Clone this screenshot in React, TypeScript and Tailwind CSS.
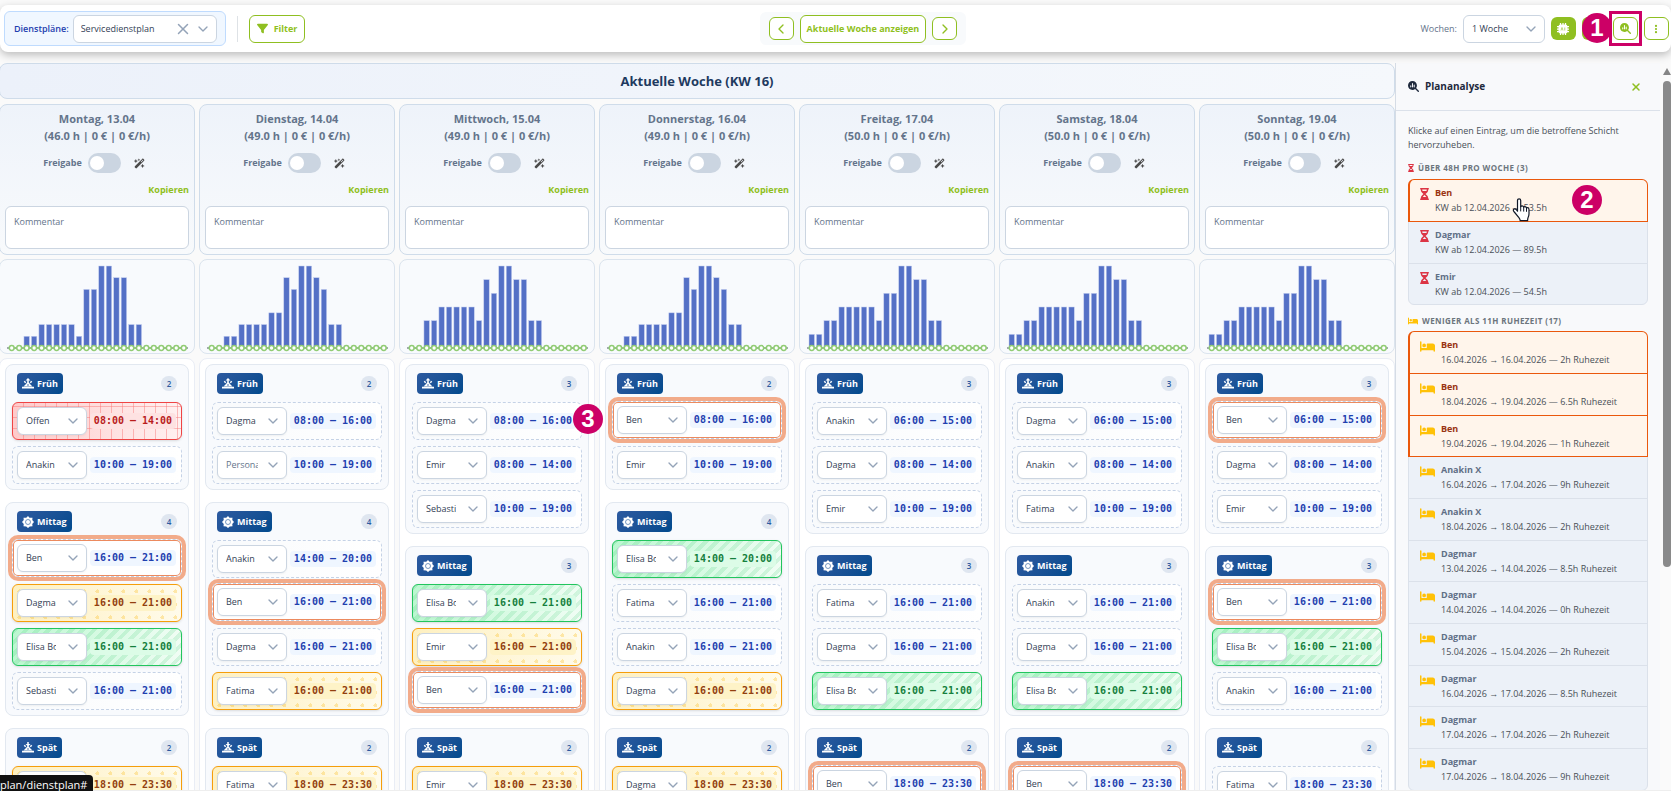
import React, { useState } from "react";
import clsx from "clsx";
import { ChevronDown, ChevronLeft, ChevronRight, X } from "lucide-react";
import {
  FaBed,
  FaEllipsisVertical,
  FaFilter,
  FaHourglassHalf,
  FaMagnifyingGlassChart,
  FaWandMagicSparkles,
} from "react-icons/fa6";

type Tone = "plain" | "red" | "yellow" | "green" | "active";
type Shift = { name: string; time: string; tone?: Tone; marker?: string };
type Day = {
  title: string;
  stats: string;
  load: number[];
  early: Shift[];
  noon: Shift[];
  late: Shift[];
};

const loadA = [0, 0, 1, 1, 2, 2, 2, 2, 2, 1, 5, 5, 7, 7, 6, 6, 2, 2, 0, 0, 0, 0, 0, 0];
const loadB = [0, 0, 1, 1, 2, 2, 2, 2, 3, 3, 6, 5, 7, 7, 6, 5, 2, 2, 0, 0, 0, 0, 0, 0];
const loadC = [0, 0, 2, 2, 3, 3, 3, 3, 3, 2, 5, 4, 6, 6, 5, 5, 2, 2, 0, 0, 0, 0, 0, 0];
const loadD = [1, 1, 2, 2, 3, 3, 3, 3, 3, 2, 4, 4, 6, 6, 5, 5, 2, 2, 0, 0, 0, 0, 0, 0];

const days: Day[] = [
  {
    title: "Montag, 13.04",
    stats: "(46.0 h | 0 € | 0 €/h)",
    load: loadA,
    early: [
      { name: "Offen", time: "08:00 – 14:00", tone: "red" },
      { name: "Anakin X", time: "10:00 – 19:00" },
    ],
    noon: [
      { name: "Ben", time: "16:00 – 21:00", tone: "active" },
      { name: "Dagmar", time: "16:00 – 21:00", tone: "yellow" },
      { name: "Elisa Bo", time: "16:00 – 21:00", tone: "green" },
      { name: "Sebastian", time: "16:00 – 21:00" },
    ],
    late: [
      { name: "Dagmar", time: "18:00 – 23:30", tone: "yellow" },
      { name: "Emir", time: "18:00 – 23:30" },
    ],
  },
  {
    title: "Dienstag, 14.04",
    stats: "(49.0 h | 0 € | 0 €/h)",
    load: loadB,
    early: [
      { name: "Dagmar", time: "08:00 – 16:00" },
      { name: "Personal", time: "10:00 – 19:00" },
    ],
    noon: [
      { name: "Anakin X", time: "14:00 – 20:00" },
      { name: "Ben", time: "16:00 – 21:00", tone: "active" },
      { name: "Dagmar", time: "16:00 – 21:00" },
      { name: "Fatima", time: "16:00 – 21:00", tone: "yellow" },
    ],
    late: [
      { name: "Fatima", time: "18:00 – 23:30", tone: "yellow" },
      { name: "Emir", time: "18:00 – 23:30" },
    ],
  },
  {
    title: "Mittwoch, 15.04",
    stats: "(49.0 h | 0 € | 0 €/h)",
    load: loadC,
    early: [
      { name: "Dagmar", time: "08:00 – 16:00", marker: "3" },
      { name: "Emir", time: "08:00 – 14:00" },
      { name: "Sebastian", time: "10:00 – 19:00" },
    ],
    noon: [
      { name: "Elisa Bo", time: "16:00 – 21:00", tone: "green" },
      { name: "Emir", time: "16:00 – 21:00", tone: "yellow" },
      { name: "Ben", time: "16:00 – 21:00", tone: "active" },
    ],
    late: [
      { name: "Emir", time: "18:00 – 23:30", tone: "yellow" },
      { name: "Ben", time: "18:00 – 23:30" },
    ],
  },
  {
    title: "Donnerstag, 16.04",
    stats: "(49.0 h | 0 € | 0 €/h)",
    load: loadB,
    early: [
      { name: "Ben", time: "08:00 – 16:00", tone: "active" },
      { name: "Emir", time: "10:00 – 19:00" },
    ],
    noon: [
      { name: "Elisa Bo", time: "14:00 – 20:00", tone: "green" },
      { name: "Fatima", time: "16:00 – 21:00" },
      { name: "Anakin X", time: "16:00 – 21:00" },
      { name: "Dagmar", time: "16:00 – 21:00", tone: "yellow" },
    ],
    late: [
      { name: "Dagmar", time: "18:00 – 23:30", tone: "yellow" },
      { name: "Ben", time: "18:00 – 23:30" },
    ],
  },
  {
    title: "Freitag, 17.04",
    stats: "(50.0 h | 0 € | 0 €/h)",
    load: loadD,
    early: [
      { name: "Anakin X", time: "06:00 – 15:00" },
      { name: "Dagmar", time: "08:00 – 14:00" },
      { name: "Emir", time: "10:00 – 19:00" },
    ],
    noon: [
      { name: "Fatima", time: "16:00 – 21:00" },
      { name: "Dagmar", time: "16:00 – 21:00" },
      { name: "Elisa Bo", time: "16:00 – 21:00", tone: "green" },
    ],
    late: [
      { name: "Ben", time: "18:00 – 23:30", tone: "active" },
      { name: "Emir", time: "18:00 – 23:30" },
    ],
  },
  {
    title: "Samstag, 18.04",
    stats: "(50.0 h | 0 € | 0 €/h)",
    load: loadD,
    early: [
      { name: "Dagmar", time: "06:00 – 15:00" },
      { name: "Anakin X", time: "08:00 – 14:00" },
      { name: "Fatima", time: "10:00 – 19:00" },
    ],
    noon: [
      { name: "Anakin X", time: "16:00 – 21:00" },
      { name: "Dagmar", time: "16:00 – 21:00" },
      { name: "Elisa Bo", time: "16:00 – 21:00", tone: "green" },
    ],
    late: [
      { name: "Ben", time: "18:00 – 23:30", tone: "active" },
      { name: "Emir", time: "18:00 – 23:30" },
    ],
  },
  {
    title: "Sonntag, 19.04",
    stats: "(50.0 h | 0 € | 0 €/h)",
    load: loadD,
    early: [
      { name: "Ben", time: "06:00 – 15:00", tone: "active" },
      { name: "Dagmar", time: "08:00 – 14:00" },
      { name: "Emir", time: "10:00 – 19:00" },
    ],
    noon: [
      { name: "Ben", time: "16:00 – 21:00", tone: "active" },
      { name: "Elisa Bo", time: "16:00 – 21:00", tone: "green" },
      { name: "Anakin X", time: "16:00 – 21:00" },
    ],
    late: [
      { name: "Fatima", time: "18:00 – 23:30" },
      { name: "Emir", time: "18:00 – 23:30" },
    ],
  },
];

const overtime = [
  { name: "Ben", detail: "KW ab 12.04.2026 — 53.5h", active: true },
  { name: "Dagmar", detail: "KW ab 12.04.2026 — 89.5h" },
  { name: "Emir", detail: "KW ab 12.04.2026 — 54.5h" },
];

const restTimes = [
  { name: "Ben", detail: "16.04.2026 → 16.04.2026 — 2h Ruhezeit", active: true },
  { name: "Ben", detail: "18.04.2026 → 19.04.2026 — 6.5h Ruhezeit", active: true },
  { name: "Ben", detail: "19.04.2026 → 19.04.2026 — 1h Ruhezeit", active: true },
  { name: "Anakin X", detail: "16.04.2026 → 17.04.2026 — 9h Ruhezeit" },
  { name: "Anakin X", detail: "18.04.2026 → 18.04.2026 — 2h Ruhezeit" },
  { name: "Dagmar", detail: "13.04.2026 → 14.04.2026 — 8.5h Ruhezeit" },
  { name: "Dagmar", detail: "14.04.2026 → 14.04.2026 — 0h Ruhezeit" },
  { name: "Dagmar", detail: "15.04.2026 → 15.04.2026 — 2h Ruhezeit" },
  { name: "Dagmar", detail: "16.04.2026 → 17.04.2026 — 8.5h Ruhezeit" },
  { name: "Dagmar", detail: "17.04.2026 → 17.04.2026 — 2h Ruhezeit" },
  { name: "Dagmar", detail: "17.04.2026 → 18.04.2026 — 9h Ruhezeit" },
];

const rowTone: Record<Tone, string> = {
  plain: "border-dashed border-[#c5d2e6] bg-linear-to-r from-[#f8fafc] to-white",
  red: "border-[#ef4444] shadow-sm bg-[repeating-linear-gradient(0deg,transparent_0_10px,#f8717170_10px_11px),repeating-linear-gradient(90deg,transparent_0_10px,#f8717170_10px_11px),linear-gradient(90deg,#fecaca,#fff1f1)]",
  yellow:
    "border-[#f59e0b] shadow-sm bg-[radial-gradient(circle,#fbbf2455_2px,transparent_2px),linear-gradient(90deg,#fef0c0,#fffbeb)] bg-size-[13px_13px,100%_100%]",
  green:
    "border-[#22c55e] shadow-sm bg-[repeating-linear-gradient(135deg,#22c55e26_0_4px,transparent_4px_8px),linear-gradient(90deg,#bbf7d0,#f0fdf4)]",
  active:
    "z-10 -translate-y-px border-dashed border-[#c5d2e6] bg-white outline-4 outline-[#f2ab8a] inset-shadow-[0_0_0_1px_#ec8a5e]",
};

const timeTone: Record<Tone, string> = {
  plain: "bg-[#eff6ff] text-[#1e40af]",
  red: "bg-[#fee2e2] text-[#b91c1c]",
  yellow: "bg-[#fef3c7] text-[#92400e]",
  green: "bg-[#dcfce7] text-[#15803d]",
  active: "bg-[#eff6ff] text-[#1e40af]",
};

const outlineButton =
  "flex items-center justify-center rounded-md border border-[#8fbf21] bg-white text-[#8fbf21] hover:bg-[#f4f9e8]";

function Marker({ children, className }: { children: React.ReactNode; className: string }) {
  return (
    <span
      className={clsx(
        "absolute z-30 flex size-[30px] items-center justify-center rounded-full bg-[#cc0066] font-['Liberation_Sans',sans-serif] text-[24px] leading-none font-bold text-white",
        className
      )}
    >
      {children}
    </span>
  );
}

function HandCursor({ className }: { className: string }) {
  return (
    <svg viewBox="0 0 18 24" width="18" height="24" className={className} aria-hidden="true">
      <path
        d="M5.5 2.5c0-1 .7-1.7 1.6-1.7s1.6.7 1.6 1.7v6.2c.3-.5.8-.8 1.4-.8.8 0 1.4.5 1.6 1.2.3-.3.7-.5 1.2-.5.8 0 1.5.6 1.6 1.4.3-.2.6-.3.9-.3 1 0 1.6.8 1.6 1.8v4.3c0 1.6-.4 2.6-.9 3.6-.4.8-.5 1.5-.5 3.3H8.2c0-1.2-.5-2-1.3-3L2.3 14c-.9-1-1.3-1.9-.7-2.6.7-.8 1.9-.6 2.7.3l1.2 1.5z"
        fill="white"
        stroke="#111827"
        strokeWidth="1.2"
        strokeLinejoin="round"
      />
      <path d="M8.7 8.7v4.3M11.7 9.2v4M14.5 10v3.4" stroke="#111827" strokeWidth="1" strokeLinecap="round" />
    </svg>
  );
}

// Sun on the horizon with the arrow above it
function HorizonIcon({ setting }: { setting?: boolean }) {
  return (
    <svg viewBox="0 0 24 22" width="12" height="11" fill="currentColor" aria-hidden="true">
      <path d="M0 17.5h24v3.5H0z" />
      <path fillRule="evenodd" d="M12 7l4 5 5 5H3l5-5 4-5zM12 12.500a1.500 1.500 0 1 0 0 3 1.500 1.500 0 0 0 0-3z" />
      <path d={setting ? "M10.5 0h3v4H17l-5 5-5-5h3.500z" : "M12 0l5 5h-3.500v4h-3V5H7z"} />
      <path d="M3.5 7.5l2-2 3 3-2 2zM20.5 7.5l-2-2-3 3 2 2z" />
    </svg>
  );
}

function SunIcon() {
  return (
    <svg viewBox="0 0 24 24" width="12" height="12" aria-hidden="true">
      <path
        d="M12 0l3 3.500 5.500-.0.500 0L20.500 8 24 12l-3.500 4 .5 4.500-5.500.500L12 24l-3.500-3-5.500-.500.500-4.500L0 12l3.500-4L3 3.500h5.500z"
        fill="currentColor"
      />
      <circle cx="12" cy="12" r="5" fill="none" stroke="#1f5599" strokeWidth="1.2" />
    </svg>
  );
}

function ChipIcon() {
  return (
    <svg viewBox="0 0 24 24" width="12" height="12" aria-hidden="true">
      <path d="M7 0v24M12 0v24M17 0v24M0 7h24M0 12h24M0 17h24" stroke="currentColor" strokeWidth="2.5" />
      <rect x="3" y="3" width="18" height="18" rx="4" fill="currentColor" />
      <path d="M8 15l2-6 2 6M15.5 9v6" stroke="#8fbf21" strokeWidth="1.2" fill="none" />
    </svg>
  );
}

function LoadChart({ values }: { values: number[] }) {
  const max = Math.max(...values);
  const step = 7.48;
  const base = 88;
  return (
    <svg viewBox="0 0 194 93" className="block h-auto w-full" role="img" aria-label="Besetzung pro Stunde">
      <line x1="7" x2="188" y1={base} y2={base} stroke="#4b5563" />
      {values.map((value, i) => {
        const height = (value / max) * 82;
        return (
          <rect key={i} x={9 + i * step} y={base - height} width="5.4" height={height} fill="#5470c6" stroke="#c3cdf0" strokeWidth="0.5" />
        );
      })}
      <line x1="11.7" x2={11.7 + 23 * step} y1={base} y2={base} stroke="#91cc75" strokeWidth="1.5" />
      {values.map((_, i) => (
        <circle key={i} cx={11.7 + i * step} cy={base} r="2.4" fill="white" stroke="#91cc75" strokeWidth="1.5" />
      ))}
    </svg>
  );
}

function ShiftRow({ name, time, tone = "plain", marker }: Shift) {
  return (
    <div className={clsx("relative flex items-center gap-[3px] rounded-md border p-1 pr-[5px]", rowTone[tone])}>
      <div className="relative w-[70px] shrink-0">
        <select
          aria-label="Mitarbeiter"
          defaultValue={name}
          className={clsx(
            "block h-7 w-full appearance-none rounded-md border border-[#cbd5e1] bg-white pl-2 text-[9px] shadow-xs",
            name === "Personal" ? "pr-7 text-[#64748b]" : "pr-[30px] text-[#334155]"
          )}
        >
          <option>{name}</option>
        </select>
        <ChevronDown size={16} strokeWidth={2} className="pointer-events-none absolute top-[6px] right-[6px] text-[#94a3b8]" />
      </div>
      <span
        className={clsx(
          "flex-1 rounded-sm text-center font-['DejaVu_Sans_Mono',monospace] text-[10px] leading-4 font-bold whitespace-nowrap",
          timeTone[tone]
        )}
      >
        {time}
      </span>
      {marker && <Marker className="top-px -right-[22px]">{marker}</Marker>}
    </div>
  );
}

function ShiftGroup({ label, icon, shifts }: { label: string; icon: React.ReactNode; shifts: Shift[] }) {
  return (
    <section className="rounded-lg border border-[#e2e8f0] bg-[#f8fafd] px-[6px] pt-2 pb-[5px]">
      <header className="mb-2 flex items-center justify-between px-[5px]">
        <h3 className="flex h-[21px] items-center gap-[3px] rounded-sm bg-linear-135 from-[#2c5aa0] to-[#004a8d] px-[5px] text-[9px] font-bold text-white">
          {icon}
          {label}
        </h3>
        <span className="flex h-[15px] w-4 items-center justify-center rounded-full bg-[#dfe6f0] text-[8px] font-semibold text-[#2c5aa0]">
          {shifts.length}
        </span>
      </header>
      <div className="flex flex-col gap-[6px]">
        {shifts.map((shift, i) => (
          <ShiftRow key={i} {...shift} />
        ))}
      </div>
    </section>
  );
}

function DayColumn({ day }: { day: Day }) {
  return (
    <div className="flex min-w-0 flex-col gap-1">
      <div className="rounded-lg border border-[#cfdcea] bg-linear-to-b from-[#eef3fa] to-[#f8fafc] p-[5px]">
        <h2 className="text-center text-[11px] leading-[17px] font-bold text-[#64748b]">
          {day.title}
          <br />
          {day.stats}
        </h2>
        <div className="mt-[9px] flex items-center justify-center pr-[6px]">
          <label className="flex items-center gap-[6px] text-[9px] font-bold text-[#64748b]">
            Freigabe
            <input
              type="checkbox"
              className="h-5 w-[33px] appearance-none rounded-full bg-[#cbd5e1] before:mt-[3px] before:ml-[2px] before:block before:size-[14px] before:rounded-full before:bg-white checked:bg-[#8fbf21] checked:before:ml-4"
            />
          </label>
          <button type="button" aria-label="Automatisch planen" className="ml-[13px] text-[#4b4b4b]">
            <FaWandMagicSparkles size={11} />
          </button>
        </div>
        <div className="mt-[10px] flex justify-end">
          <button type="button" className="text-[9px] leading-[14px] font-bold text-[#8fbf21]">
            Kopieren
          </button>
        </div>
        <textarea
          aria-label="Kommentar"
          placeholder="Kommentar"
          className="mt-[9px] block h-[43px] w-full resize-none rounded-md border border-[#cbd5e1] bg-white px-2 py-2 text-[9px] leading-[14px] placeholder:text-[#64748b]"
        />
      </div>
      <div className="rounded-lg border border-[#dbe4ee] bg-[#f8fafd]">
        <LoadChart values={day.load} />
      </div>
      <div className="flex flex-col gap-3 rounded-t-lg border border-[#e9edf5] bg-white p-[5px]">
        <ShiftGroup label="Früh" icon={<HorizonIcon />} shifts={day.early} />
        <ShiftGroup label="Mittag" icon={<SunIcon />} shifts={day.noon} />
        <ShiftGroup label="Spät" icon={<HorizonIcon setting />} shifts={day.late} />
      </div>
    </div>
  );
}

function Toolbar() {
  const [plan, setPlan] = useState("Servicedienstplan");
  return (
    <header className="relative z-20 mt-[5px] flex h-[47px] shrink-0 items-center justify-between rounded-lg bg-white pr-[2px] pl-1 shadow-[0_3px_8px_rgba(0,0,0,0.25)]">
      <div className="flex items-center">
        <div className="flex h-[35px] items-center gap-1 rounded-md border border-[#bfdbfe] bg-[#f0f7ff] pr-2 pl-[9px]">
          <label htmlFor="plan" className="text-[9px] font-semibold text-[#1e40af]">
            Dienstpläne:
          </label>
          <div className="relative">
            <select
              id="plan"
              value={plan}
              onChange={(e) => setPlan(e.target.value)}
              className="block h-7 w-36 appearance-none rounded-md border border-[#cbd5e1] bg-white pr-10 pl-[7px] text-[9px] text-[#334155]"
            >
              <option>Servicedienstplan</option>
              <option value=""></option>
            </select>
            <button
              type="button"
              aria-label="Auswahl löschen"
              onClick={() => setPlan("")}
              className="absolute top-[5px] right-[25px] text-[#94a3b8]"
            >
              <X size={18} strokeWidth={2} />
            </button>
            <ChevronDown size={16} className="pointer-events-none absolute top-[6px] right-[6px] text-[#94a3b8]" />
          </div>
        </div>
        <span className="mx-[11px] h-[26px] w-px bg-[#dee2e6]" />
        <button type="button" className={clsx(outlineButton, "h-7 gap-[6px] px-[7px] text-[9px] font-bold")}>
          <FaFilter size={11} />
          Filter
        </button>
      </div>

      <nav className="flex h-[33px] items-center gap-[6px] rounded-md bg-[#f8fafc] px-[9px]">
        <button type="button" aria-label="Vorherige Woche" className={clsx(outlineButton, "h-[23px] w-[25px]")}>
          <ChevronLeft size={16} strokeWidth={2} />
        </button>
        <button type="button" className={clsx(outlineButton, "h-7 px-[6px] text-[9px] font-bold")}>
          Aktuelle Woche anzeigen
        </button>
        <button type="button" aria-label="Nächste Woche" className={clsx(outlineButton, "h-[23px] w-[25px]")}>
          <ChevronRight size={16} strokeWidth={2} />
        </button>
      </nav>

      <div className="flex items-center justify-end gap-[6px]">
        <label htmlFor="weeks" className="text-[9px] text-[#64748b]">
          Wochen:
        </label>
        <div className="relative">
          <select
            id="weeks"
            className="block h-7 w-[82px] appearance-none rounded-md border border-[#cbd5e1] bg-white pr-6 pl-2 text-[9px] text-[#334155]"
          >
            <option>1 Woche</option>
          </select>
          <ChevronDown size={16} className="pointer-events-none absolute top-[6px] right-[6px] text-[#94a3b8]" />
        </div>
        <button type="button" aria-label="KI-Planung" className="flex h-[23px] w-[25px] items-center justify-center rounded-md bg-[#8fbf21] text-white">
          <ChipIcon />
        </button>
        <div className="relative">
          <button type="button" aria-label="Veröffentlichen" className="block h-[23px] w-[25px] rounded-md bg-[#8fbf21]" />
          <Marker className="-top-1 left-0">1</Marker>
        </div>
        <div className="relative">
          <button type="button" aria-label="Plananalyse" className={clsx(outlineButton, "h-[23px] w-[25px]")}>
            <FaMagnifyingGlassChart size={11} />
          </button>
          <span className="pointer-events-none absolute -inset-x-1 -inset-y-[6px] border-3 border-[#cc0066]" />
        </div>
        <button type="button" aria-label="Mehr" className={clsx(outlineButton, "h-[23px] w-[25px]")}>
          <FaEllipsisVertical size={10} />
        </button>
      </div>
    </header>
  );
}

type Entry = { name: string; detail: string; active?: boolean };

function EntryList({ entries, icon, marked }: { entries: Entry[]; icon: React.ReactNode; marked?: boolean }) {
  return (
    <ul className="mr-3 pt-px">
      {entries.map((entry, i) => (
        <li
          key={i}
          className={clsx(
            "relative -mt-px border first:rounded-t-md last:rounded-b-md nth-[3n]:*:pb-[5px]",
            entry.active ? "z-10 border-l-2 border-[#ea580c] bg-[#fff5eb]" : "border-[#dbe1ea] bg-[#ecf1f8] pl-px"
          )}
        >
          <button type="button" className="flex w-full items-start gap-[6px] pt-[6px] pb-[6px] pl-[10px] text-left">
            <span className="pt-[2px]">{icon}</span>
            <span className="text-[9px] leading-[15px] text-[#495057]">
              <strong className={clsx("block leading-[14px] font-bold", entry.active ? "text-[#9a3412]" : "text-[#5f6f86]")}>
                {entry.name}
              </strong>
              {entry.detail}
            </span>
          </button>
          {marked && i === 0 && (
            <>
              <HandCursor className="absolute top-[18px] left-[102px]" />
              <Marker className="top-[5px] right-[45px]">2</Marker>
            </>
          )}
        </li>
      ))}
    </ul>
  );
}

function AnalysisPanel() {
  return (
    <aside className="flex w-[276px] shrink-0 border-l border-[#d5dce5] bg-[#f8f9fb]">
      <div className="min-w-0 flex-1">
        <div className="flex h-12 items-center gap-[6px] border-b border-[#dbe1ea] pr-[18px] pl-3">
          <FaMagnifyingGlassChart size={11} className="text-[#1f2a3d]" />
          <h2 className="flex-1 text-[10px] font-bold text-[#1f2a3d]">Plananalyse</h2>
          <button type="button" aria-label="Schließen" className="text-[#8fbf21]">
            <X size={12} strokeWidth={3} />
          </button>
        </div>
        <div className="pt-[13px] pl-3">
          <p className="text-[9px] leading-[14px] text-[#495057]">
            Klicke auf einen Eintrag, um die betroffene Schicht hervorzuheben.
          </p>
          <h3 className="mt-[9px] mb-1 flex items-center gap-1 text-[8px] leading-[14px] font-bold tracking-wider text-[#6c757d] uppercase">
            <FaHourglassHalf size={8} className="w-[6px] text-[#dc3545]" />
            Über 48h pro Woche (3)
          </h3>
          <EntryList marked entries={overtime} icon={<FaHourglassHalf size={12} className="w-[9px] text-[#dc3545]" />} />
          <h3 className="mt-[9px] mb-[3px] flex items-center gap-1 text-[8px] leading-[14px] font-bold tracking-wider text-[#6c757d] uppercase">
            <FaBed size={10} className="text-[#ffc107]" />
            Weniger als 11h Ruhezeit (17)
          </h3>
          <EntryList entries={restTimes} icon={<FaBed size={15} className="-mt-px text-[#ffc107]" />} />
        </div>
      </div>
      {/* Scrollbar */}
      <div className="flex w-[11px] flex-col items-end bg-[#fafafa] pt-[5px]">
        <span className="border-x-4 border-b-[7px] border-x-transparent border-b-[#858585]" />
        <span className="mt-[6px] h-[486px] w-2 rounded-full bg-[#8a8a8a]" />
      </div>
    </aside>
  );
}

export default function App() {
  return (
    <div className="flex h-screen flex-col overflow-hidden border-b border-[#eeeeee] bg-[#fafafa] font-['Open_Sans','Noto_Sans',sans-serif]">
      <Toolbar />
      <div className="-ml-px flex min-h-0 flex-1 pt-[11px]">
        <main className="min-w-0 flex-1">
          <h1 className="mb-[5px] flex h-9 items-center justify-center rounded-lg border border-[#cfdcea] bg-linear-to-r from-[#ecf1fa] to-[#f5f8fc] pt-px text-[13px] font-bold text-[#1e3a5f]">
            Aktuelle Woche (KW 16)
          </h1>
          <div className="grid grid-cols-7 gap-1">
            {days.map((day) => (
              <DayColumn key={day.title} day={day} />
            ))}
          </div>
        </main>
        <AnalysisPanel />
      </div>
      <div className="fixed bottom-0 left-0 z-40 h-4 overflow-hidden rounded-tr-sm bg-[#111111] pr-[6px] text-[11px] leading-5 text-white">
        plan/dienstplan#
      </div>
    </div>
  );
}
